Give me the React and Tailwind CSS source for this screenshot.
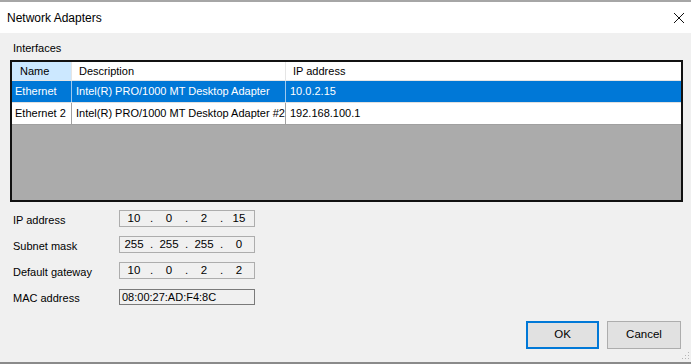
import React from 'react';

const font = { fontFamily: '"Liberation Sans", Arial, sans-serif' };

function IpBox({ parts }) {
    return (
        <div className="flex h-[17px] w-[136px] items-center border border-[#adadad] bg-[#f0f0f0] pl-[1px] text-[11.5px] leading-none text-black">
            {parts.map((p, i) => (
                <React.Fragment key={i}>
                    <span className="w-[26px] text-center">{p}</span>
                    {i < 3 && <span className="w-[9px] text-center">.</span>}
                </React.Fragment>
            ))}
        </div>
    );
}

export default function App() {
    const rows = [
        { name: 'Ethernet', desc: 'Intel(R) PRO/1000 MT Desktop Adapter', ip: '10.0.2.15', selected: true },
        { name: 'Ethernet 2', desc: 'Intel(R) PRO/1000 MT Desktop Adapter #2', ip: '192.168.100.1', selected: false },
    ];

    const fields = [
        { label: 'IP address', parts: ['10', '0', '2', '15'] },
        { label: 'Subnet mask', parts: ['255', '255', '255', '0'] },
        { label: 'Default gateway', parts: ['10', '0', '2', '2'] },
    ];

    return (
        <div className="relative flex h-[364px] w-[691px] flex-col overflow-hidden bg-[#f0f0f0] text-black" style={font}>
            {/* Title bar */}
            <div className="flex h-[33px] items-center justify-between border-t-2 border-[#a6a6a6] bg-white pl-[7px] pr-[6px] text-[12px]">
                <span>Network Adapters</span>
                <svg width="12" height="12" viewBox="0 0 12 12">
                    <path d="M1 1 L11 11 M11 1 L1 11" stroke="#111" strokeWidth="1" />
                </svg>
            </div>

            {/* Body */}
            <div className="flex flex-1 flex-col px-[10px] pt-[8px] text-[11px]">
                <div className="h-[15px] pl-[3px] leading-[15px]">Interfaces</div>

                {/* List view */}
                <div className="mt-[4px] flex h-[142px] w-[673px] flex-col border-2 border-[#111] bg-[#ababab]">
                    <div className="flex h-[19px] border-b border-[#e5e5e5] bg-white leading-[19px]">
                        <div className="w-[60px] border-r border-[#e5e5e5] bg-[#cce8ff] pl-[8px]">Name</div>
                        <div className="w-[214px] border-r border-[#e5e5e5] pl-[7px]">Description</div>
                        <div className="flex-1 pl-[7px]">IP address</div>
                    </div>
                    {rows.map((r) => (
                        <div
                            key={r.name}
                            className={`flex h-[22px] border-b leading-[21px] ${r.selected ? 'border-[#e0e0e0] bg-[#0078d7] text-white' : 'border-[#a0a0a0] bg-white text-black'}`}
                        >
                            <div className={`w-[60px] whitespace-nowrap border-r pl-[3px] ${r.selected ? 'border-[#9fc9ee]' : 'border-[#a0a0a0]'}`}>{r.name}</div>
                            <div className={`w-[214px] whitespace-nowrap border-r pl-[4px] ${r.selected ? 'border-[#9fc9ee]' : 'border-[#a0a0a0]'}`}>{r.desc}</div>
                            <div className="flex-1 whitespace-nowrap pl-[4px]">{r.ip}</div>
                        </div>
                    ))}
                </div>

                {/* Fields */}
                <div className="mt-[8px] flex flex-col gap-[9px] pl-[3px]">
                    {fields.map((f) => (
                        <div key={f.label} className="flex h-[17px] items-start">
                            <span className="h-[17px] w-[106px] leading-[20px]">{f.label}</span>
                            <IpBox parts={f.parts} />
                        </div>
                    ))}
                    <div className="mt-[1px] flex h-[16px] items-start">
                        <span className="h-[16px] w-[106px] leading-[19px]">MAC address</span>
                        <div className="flex h-[16px] w-[136px] items-center border border-[#7a7a7a] bg-[#f0f0f0] pl-[2px] leading-none">
                            08:00:27:AD:F4:8C
                        </div>
                    </div>
                </div>

                {/* Buttons */}
                <div className="mt-auto flex justify-end gap-[8px] pb-[13px]">
                    <button className="h-[28px] w-[73px] border-2 border-[#0078d7] bg-[#e1e1e1] text-[11.5px]">OK</button>
                    <button className="h-[28px] w-[74px] border border-[#adadad] bg-[#e1e1e1] text-[11.5px]">Cancel</button>
                </div>
            </div>

            <div className="h-[2px] bg-[#8a8a8a]" />

            {/* Resize grip */}
            <svg className="absolute bottom-[4px] right-[1px]" width="8" height="8" viewBox="0 0 8 8">
                <rect x="6" y="0" width="1" height="1" fill="#b5b5b5" />
                <rect x="3" y="3" width="1" height="1" fill="#b5b5b5" />
                <rect x="6" y="3" width="1" height="1" fill="#b5b5b5" />
                <rect x="0" y="6" width="1" height="1" fill="#b5b5b5" />
                <rect x="3" y="6" width="1" height="1" fill="#b5b5b5" />
                <rect x="6" y="6" width="1" height="1" fill="#b5b5b5" />
            </svg>
        </div>
    );
}
